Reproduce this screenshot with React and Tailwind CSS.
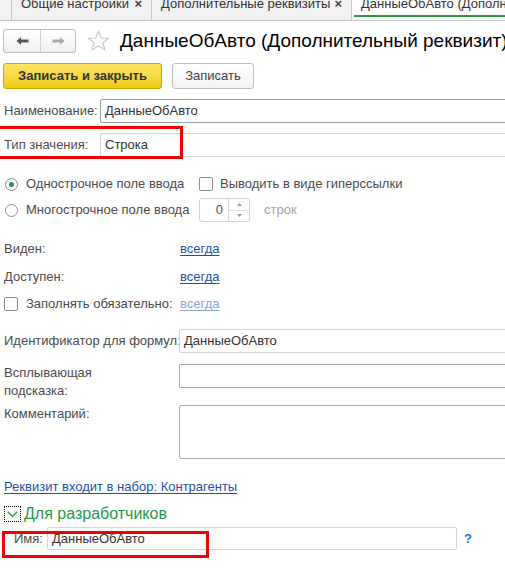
import React from 'react';

function Radio({ checked }) {
  return (
    <span className="w-[13px] h-[13px] rounded-full border border-[#8e8e8e] bg-white flex items-center justify-center shrink-0">
      {checked && <span className="w-[5px] h-[5px] rounded-full bg-[#1f9a48]" />}
    </span>
  );
}

function Check() {
  return <span className="w-[14px] h-[14px] rounded-[2px] border border-[#8e8e8e] bg-white shrink-0" />;
}

function Field({ value, border = 'border-[#a3a3a3]', className = '' }) {
  return (
    <div className={`${border} ${className} border rounded-[2px] bg-white flex items-center px-[4px] text-[#333]`}>
      {value}
    </div>
  );
}

function Tab({ title, active, width }) {
  return (
    <div
      className={`${active ? 'bg-white' : ''} relative h-full border-r border-[#c9c9c9] flex items-start shrink-0 overflow-hidden`}
      style={{ width }}
    >
      <span className="-mt-[4px] pl-[9px] whitespace-nowrap text-[#333] leading-[15px]">{title}</span>
      {!active && <span className="-mt-[4px] ml-auto mr-[9px] font-bold text-[#444] leading-[15px]">×</span>}
      {active && <span className="absolute left-[2px] right-0 top-[15px] h-[2px] bg-[#2a9b47]" />}
    </div>
  );
}

export default function App() {
  return (
    <div className="w-[505px] h-[586px] overflow-hidden bg-white font-['Liberation_Sans',Arial,sans-serif] text-[13px] text-[#4a4a4a]">
      {/* tabs */}
      <div className="h-[21px] bg-[#f2f2f2] border-b border-[#c4c4c4] flex">
        <div className="w-[12px] h-full border-r border-[#c9c9c9] shrink-0" />
        <Tab title="Общие настройки" width={140} />
        <Tab title="Дополнительные реквизиты" width={200} />
        <Tab title="ДанныеОбАвто (Дополнительный реквизит)" width={200} active />
      </div>

      {/* header */}
      <div className="mt-[8px] h-[24px] flex items-center pl-[3px]">
        <div className="w-[73px] h-[24px] border border-[#bcbcbc] rounded-[3px] bg-gradient-to-b from-white to-[#efefef] flex shrink-0">
          <div className="w-[37px] h-full border-r border-[#d0d0d0] flex items-center justify-center">
            <svg width="13" height="10" viewBox="0 0 13 10">
              <path d="M0.5 5 L5 1 L5 3.6 L12.5 3.6 L12.5 6.4 L5 6.4 L5 9 Z" fill="#555" />
            </svg>
          </div>
          <div className="flex-1 flex items-center justify-center">
            <svg width="13" height="10" viewBox="0 0 13 10">
              <path d="M12.5 5 L8 1 L8 3.6 L0.5 3.6 L0.5 6.4 L8 6.4 L8 9 Z" fill="#a8a8a8" />
            </svg>
          </div>
        </div>
        <svg className="ml-[11px] shrink-0" width="23" height="22" viewBox="0 0 24 23">
          <path
            d="M12 1.2 L14.9 8.3 L22.6 8.6 L16.6 13.4 L18.7 20.8 L12 16.6 L5.3 20.8 L7.4 13.4 L1.4 8.6 L9.1 8.3 Z"
            fill="none"
            stroke="#c2c2c2"
            strokeWidth="1.1"
            strokeLinejoin="round"
          />
        </svg>
        <span className="ml-[10px] text-[19px] text-black whitespace-nowrap leading-[24px]">
          ДанныеОбАвто (Дополнительный реквизит)
        </span>
      </div>

      {/* buttons */}
      <div className="mt-[10px] h-[26px] flex pl-[3px] gap-[10px]">
        <button className="w-[159px] h-[26px] rounded-[3px] border border-[#c9a900] bg-gradient-to-b from-[#fbe562] to-[#f1cb00] font-bold text-[#333] text-[13px]">
          Записать и закрыть
        </button>
        <button className="w-[82px] h-[26px] rounded-[3px] border border-[#bfbfbf] bg-gradient-to-b from-white to-[#f3f3f3] text-[#444] text-[13px]">
          Записать
        </button>
      </div>

      {/* наименование */}
      <div className="mt-[10px] h-[24px] flex items-center">
        <span className="w-[100px] pl-[4px] shrink-0">Наименование:</span>
        <Field value="ДанныеОбАвто" className="h-[24px] w-[420px] shrink-0" border="border-[#9c9c9c]" />
      </div>

      {/* тип значения */}
      <div className="relative mt-[10px] h-[24px] flex items-center">
        <span className="w-[100px] pl-[4px] shrink-0">Тип значения:</span>
        <Field value="Строка" className="h-[24px] w-[420px] shrink-0" border="border-[#d6d6d6]" />
        <span className="absolute left-[-3px] top-[-7px] w-[186px] h-[33px] border-[3px] border-[#f20000]" />
      </div>

      {/* radios */}
      <div className="mt-[17px] h-[20px] flex items-center pl-[5px]">
        <Radio checked />
        <span className="ml-[8px] w-[173px] shrink-0">Однострочное поле ввода</span>
        <Check />
        <span className="ml-[7px] whitespace-nowrap">Выводить в виде гиперссылки</span>
      </div>
      <div className="mt-[4px] h-[24px] flex items-center pl-[5px]">
        <Radio />
        <span className="ml-[8px] w-[173px] shrink-0">Многострочное поле ввода</span>
        <div className="w-[51px] h-[24px] border border-[#d2d2d2] rounded-[3px] flex shrink-0">
          <span className="w-[29px] border-r border-[#d8d8d8] flex items-center justify-end pr-[5px] text-[#555]">0</span>
          <div className="flex-1 flex flex-col">
            <span className="flex-1 border-b border-[#e0e0e0] flex items-center justify-center">
              <svg width="5" height="3" viewBox="0 0 5 3"><path d="M0 3 L2.5 0 L5 3 Z" fill="#9a9a9a" /></svg>
            </span>
            <span className="flex-1 flex items-center justify-center">
              <svg width="5" height="3" viewBox="0 0 5 3"><path d="M0 0 L2.5 3 L5 0 Z" fill="#9a9a9a" /></svg>
            </span>
          </div>
        </div>
        <span className="ml-[14px] text-[#a3a3a3]">строк</span>
      </div>

      {/* видимость */}
      <div className="mt-[17px] h-[20px] flex items-center">
        <span className="w-[180px] pl-[4px] shrink-0">Виден:</span>
        <span className="text-[#1d4fa6] underline underline-offset-2">всегда</span>
      </div>
      <div className="mt-[8px] h-[20px] flex items-center">
        <span className="w-[180px] pl-[4px] shrink-0">Доступен:</span>
        <span className="text-[#1d4fa6] underline underline-offset-2">всегда</span>
      </div>
      <div className="mt-[7px] h-[20px] flex items-center pl-[4px]">
        <Check />
        <span className="ml-[8px] w-[154px] shrink-0">Заполнять обязательно:</span>
        <span className="text-[#88a6da] underline underline-offset-2">всегда</span>
      </div>

      {/* идентификатор */}
      <div className="mt-[15px] h-[24px] flex items-center">
        <span className="w-[179px] pl-[4px] shrink-0 whitespace-nowrap">Идентификатор для формул:</span>
        <Field value="ДанныеОбАвто" className="h-[24px] w-[340px] shrink-0" border="border-[#d2d2d2]" />
      </div>
      <div className="mt-[11px] h-[36px] flex items-start">
        <span className="w-[179px] pl-[4px] shrink-0 leading-[18px]">
          Всплывающая
          <br />
          подсказка:
        </span>
        <Field value="" className="h-[24px] w-[340px] shrink-0" border="border-[#a6a6a6]" />
      </div>
      <div className="mt-[5px] h-[54px] flex items-start">
        <span className="w-[179px] pl-[4px] shrink-0 leading-[18px]">Комментарий:</span>
        <Field value="" className="h-[54px] w-[340px] shrink-0" border="border-[#a6a6a6]" />
      </div>

      {/* набор */}
      <div className="mt-[19px] h-[18px] flex items-center pl-[4px]">
        <span className="text-[#1d4fa6] underline underline-offset-2">Реквизит входит в набор: Контрагенты</span>
      </div>

      {/* для разработчиков */}
      <div className="mt-[9px] h-[18px] flex items-center pl-[4px]">
        <span className="w-[17px] h-[16px] border border-dotted border-black flex items-center justify-center shrink-0">
          <svg width="11" height="7" viewBox="0 0 11 7">
            <path d="M0.8 0.8 L5.5 5.6 L10.2 0.8" fill="none" stroke="#1f9a48" strokeWidth="1.4" />
          </svg>
        </span>
        <span className="ml-[3px] text-[16px] text-[#1f9a48] leading-[18px]">Для разработчиков</span>
      </div>
      <div className="relative mt-[4px] h-[23px] flex items-center">
        <span className="w-[47px] pl-[14px] shrink-0">Имя:</span>
        <Field value="ДанныеОбАвто" className="h-[23px] w-[410px] shrink-0" border="border-[#d6d6d6]" />
        <span className="ml-[7px] text-[#2b79c2] font-bold">?</span>
        <span className="absolute left-[2px] top-[4px] w-[207px] h-[27px] border-[3px] border-[#f20000]" />
      </div>
    </div>
  );
}
